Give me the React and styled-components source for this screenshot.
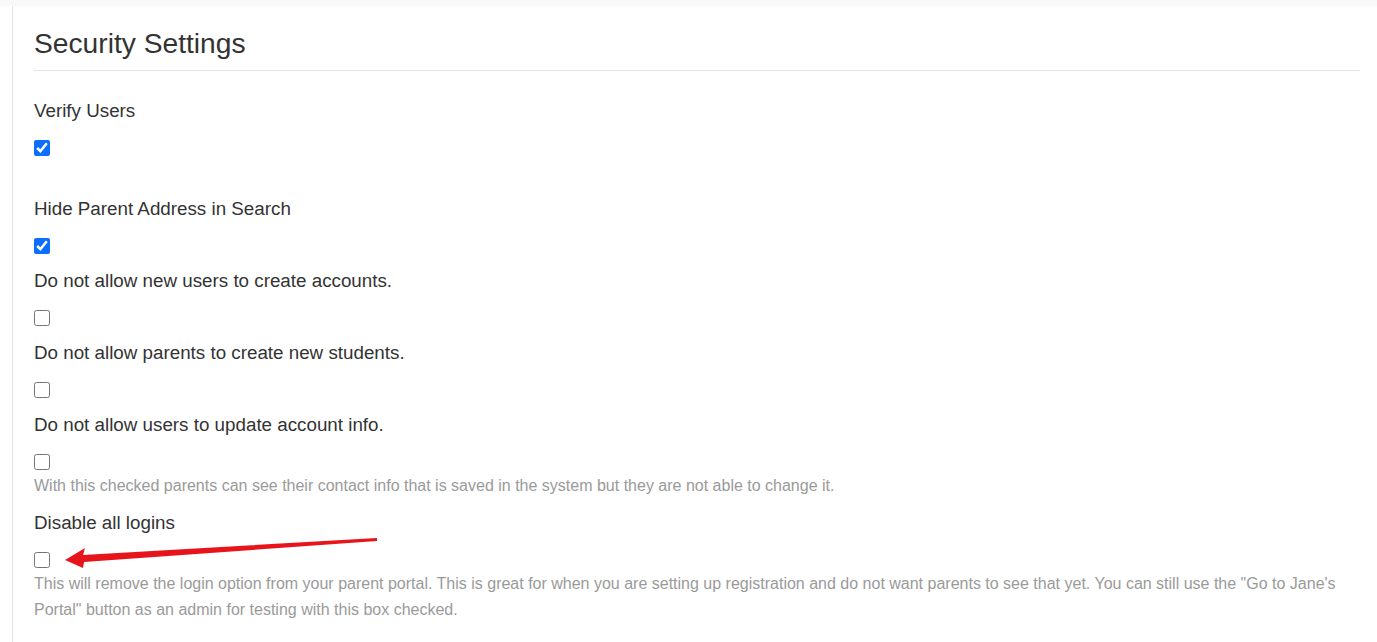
import React from "react";
import styled, { createGlobalStyle } from "styled-components";

const Global = createGlobalStyle`
  html, body { margin: 0; padding: 0; background: #fff; }
  body { font-family: "Liberation Sans", Arial, sans-serif; color: #333; }
`;

const Page = styled.div`
  position: relative;
  min-height: 642px;
  box-sizing: border-box;
  border-top: 6px solid #f9f9f9;
  padding-left: 12px;
`;

const Panel = styled.div`
  border-left: 1px solid #e3e3e3;
  min-height: 636px;
  padding: 0 17px 0 21px;
`;

const Header = styled.h2`
  margin: 0;
  padding: 22px 0 12px;
  font-size: 28.2px;
  font-weight: 400;
  line-height: 30px;
  color: #333;
  border-bottom: 1px solid #e5e5e5;
`;

const Form = styled.div`
  display: flex;
  flex-direction: column;
  padding-top: 27px;
`;

const Group = styled.div`
  display: flex;
  flex-direction: column;
  align-items: flex-start;
  margin-bottom: ${(p) => p.$gap || 0}px;
`;

const Label = styled.label`
  font-size: 18.8px;
  line-height: 26px;
  color: #333;
  margin-bottom: 16px;
`;

const Check = styled.input.attrs({ type: "checkbox" })`
  width: 16px;
  height: 16px;
  margin: 0;
  accent-color: #0b6efd;
`;

const Help = styled.p`
  margin: 3px 0 0;
  font-size: 16px;
  line-height: 26px;
  color: #9a9a9a;
`;

const Arrow = styled.svg`
  position: absolute;
  left: 60px;
  top: 528px;
  pointer-events: none;
`;

export default function App() {
  return (
    <>
      <Global />
      <Page>
        <Panel>
          <Header>Security Settings</Header>
          <Form>
            <Group $gap={40}>
              <Label>Verify Users</Label>
              <Check defaultChecked />
            </Group>
            <Group $gap={14}>
              <Label>Hide Parent Address in Search</Label>
              <Check defaultChecked />
            </Group>
            <Group $gap={14}>
              <Label>Do not allow new users to create accounts.</Label>
              <Check />
            </Group>
            <Group $gap={14}>
              <Label>Do not allow parents to create new students.</Label>
              <Check />
            </Group>
            <Group $gap={11}>
              <Label>Do not allow users to update account info.</Label>
              <Check />
              <Help>
                With this checked parents can see their contact info that is
                saved in the system but they are not able to change it.
              </Help>
            </Group>
            <Group>
              <Label>Disable all logins</Label>
              <Check />
              <Help>
                This will remove the login option from your parent portal. This
                is great for when you are setting up registration and do not
                want parents to see that yet. You can still use the "Go to
                Jane's Portal" button as an admin for testing with this box
                checked.
              </Help>
            </Group>
          </Form>
        </Panel>
        <Arrow width="322" height="36" viewBox="0 0 322 36">
          <path
            d="M5 26 L25 14 L23 21 L317 4 L317 7 L24 28 L23 34 Z"
            fill="#e8141b"
          />
        </Arrow>
      </Page>
    </>
  );
}
